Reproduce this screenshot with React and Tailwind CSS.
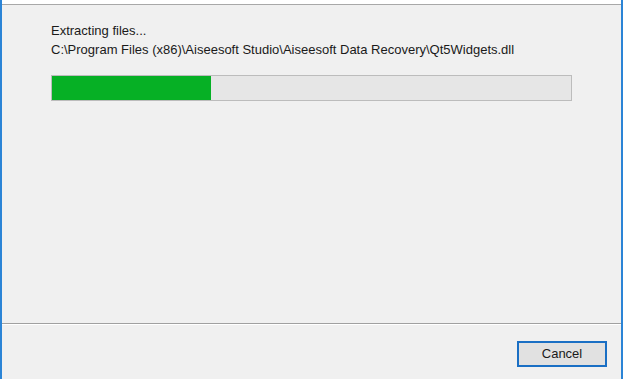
export default function App() {
  return (
    <div
      className="w-[623px] h-[379px] overflow-hidden bg-[#f0f0f0] border-l-2 border-r-2 border-[#2b84d6] flex flex-col"
      style={{ fontFamily: '"Liberation Sans", Arial, sans-serif' }}
    >
      <div className="h-[5px] shrink-0 bg-white border-b border-[#a8a8a8]" />
      <div className="flex flex-col pl-[49px] pr-[49px] pt-[16px] text-[13px] leading-[19px] text-[#1a1a1a]">
        <div>Extracting files...</div>
        <div>C:\Program Files (x86)\Aiseesoft Studio\Aiseesoft Data Recovery\Qt5Widgets.dll</div>
        <div className="mt-[16px] w-[521px] h-[26px] border border-[#bcbcbc] bg-[#e6e6e6]">
          <div className="h-full w-[159px] bg-[#06b025]" />
        </div>
      </div>
      <div className="flex-1" />
      <div className="h-[2px] shrink-0 border-t border-[#a0a0a0] bg-white mb-[16px]" />
      <div className="flex justify-end pr-[14px] pb-[12px]">
        <button className="w-[90px] h-[26px] border-2 border-[#1a6fc4] bg-[#e1e1e1] text-[13px] text-[#1a1a1a] flex items-center justify-center">
          Cancel
        </button>
      </div>
    </div>
  );
}
